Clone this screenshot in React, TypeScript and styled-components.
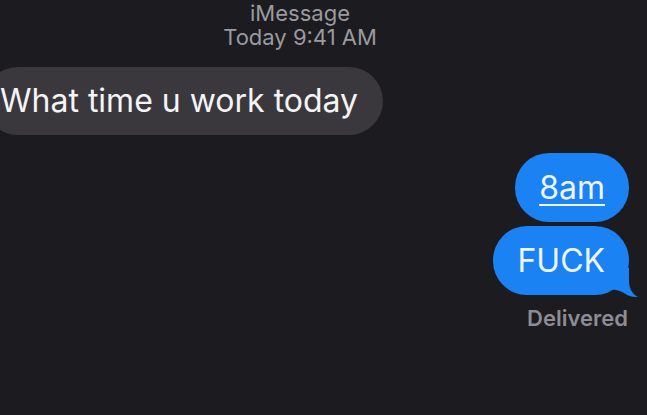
import React from 'react';
import styled, { createGlobalStyle } from 'styled-components';

const GlobalStyle = createGlobalStyle`
    html, body {
        margin: 0;
        padding: 0;
        background: #1c1b20;
        overflow: hidden;
    }
`;

const Screen = styled.div`
    background: #1c1b20;
    display: flex;
    flex-direction: column;
    font-family: Inter, "Liberation Sans", sans-serif;
    height: 415px;
    overflow: hidden;
    width: 647px;
`;

const Header = styled.div`
    color: #9b9a9f;
    display: flex;
    flex-direction: column;
    align-items: center;
    font-size: 22px;
    padding-right: 47px;
`;

const Service = styled.span`
    line-height: 27px;
`;

const Timestamp = styled.span`
    line-height: 20px;
`;

const Row = styled.div<{ $side: 'left' | 'right'; $gap: number }>`
    display: flex;
    justify-content: ${(p) => (p.$side === 'left' ? 'flex-start' : 'flex-end')};
    margin-top: ${(p) => p.$gap}px;
    padding-right: 18px;
`;

const Incoming = styled.div`
    background: #3a383d;
    border-radius: 34px;
    color: #f4f4f6;
    font-size: 32px;
    height: 68px;
    line-height: 68px;
    margin-left: -16px;
    padding: 0 25px 0 16px;
    white-space: nowrap;
`;

const Outgoing = styled.div<{ $underline?: boolean }>`
    background: #1b82f3;
    border-radius: 34px;
    color: #eef5ff;
    font-size: 32px;
    height: 69px;
    line-height: 69px;
    padding: 0 24px;
    position: relative;
    text-decoration: ${(p) => (p.$underline ? 'underline' : 'none')};
    text-decoration-thickness: 1.5px;
    text-underline-offset: 5px;
    white-space: nowrap;
`;

const Tail = styled.svg`
    bottom: -3px;
    position: absolute;
    right: -10px;
`;

const Status = styled.div`
    color: #8d8c92;
    font-size: 22px;
    font-weight: 600;
    line-height: 24px;
    margin-top: 11px;
    padding-right: 19px;
    text-align: right;
`;

const BubbleTail = () => (
    <Tail width="30" height="30" viewBox="0 0 30 30">
        <path
            d="M0 0 L20 0 L20 13 C20 20 23 26 29 29 C24 29.5 19 28 15 25 C12 23 8 22 4 21.5 L0 21 Z"
            fill="#1b82f3"
        />
    </Tail>
);

export default function App() {
    return (
        <Screen>
            <GlobalStyle />
            <Header>
                <Service>iMessage</Service>
                <Timestamp>Today 9:41 AM</Timestamp>
            </Header>
            <Row $side="left" $gap={20}>
                <Incoming>What time u work today</Incoming>
            </Row>
            <Row $side="right" $gap={18}>
                <Outgoing $underline>8am</Outgoing>
            </Row>
            <Row $side="right" $gap={4}>
                <Outgoing>
                    FUCK
                    <BubbleTail />
                </Outgoing>
            </Row>
            <Status>Delivered</Status>
        </Screen>
    );
}
